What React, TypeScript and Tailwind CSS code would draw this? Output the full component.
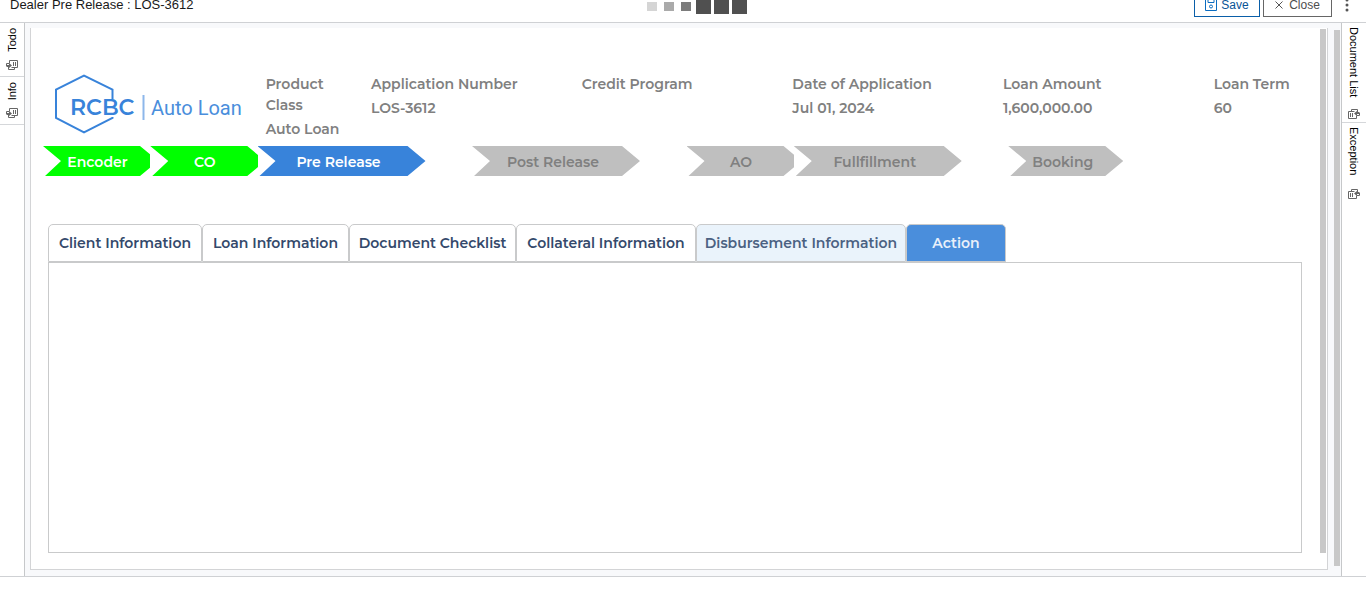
import React from "react";

const info = [
  { label: "Product Class", value: "Auto Loan", span: "col-span-1 pr-5" },
  { label: "Application Number", value: "LOS-3612", span: "col-span-2 pr-5" },
  { label: "Credit Program", value: "", span: "col-span-2 pr-5" },
  { label: "Date of Application", value: "Jul 01, 2024", span: "col-span-2 pr-5" },
  { label: "Loan Amount", value: "1,600,000.00", span: "col-span-2 pr-5" },
  { label: "Loan Term", value: "60", span: "col-span-1" },
];

const done = "bg-[#00ff00] text-white";
const current = "bg-[#3883da] text-white";
const pending = "bg-[#bfbfbf] text-[#808080]";

const steps = [
  { label: "Encoder", tone: done, span: "col-span-1", width: "w-[115px]" },
  { label: "CO", tone: done, span: "col-span-1", width: "w-[115px]" },
  { label: "Pre Release", tone: current, span: "col-span-2", width: "w-[168px]" },
  { label: "Post Release", tone: pending, span: "col-span-2", width: "w-[168px]" },
  { label: "AO", tone: pending, span: "col-span-1", width: "w-[115px]" },
  { label: "Fullfillment", tone: pending, span: "col-span-2", width: "w-[168px]" },
  { label: "Booking", tone: pending, span: "col-span-2", width: "w-[115px]" },
];

const plainTab = "bg-white text-[#34496b]";
const tabs = [
  { label: "Client Information", style: plainTab, width: "w-[154px]" },
  { label: "Loan Information", style: plainTab, width: "w-[147px]" },
  { label: "Document Checklist", style: plainTab, width: "w-[167px]" },
  { label: "Collateral Information", style: plainTab, width: "w-[180px]" },
  { label: "Disbursement Information", style: "bg-[#eaf3fb] text-[#4b6182]", width: "w-[210px]" },
  { label: "Action", style: "bg-[#4a8edc] text-[#e9f0fa]", width: "w-[100px]" },
];

function PanelIcon({ flipped = false }: { flipped?: boolean }) {
  return (
    <svg
      viewBox="0 0 12 10"
      className={flipped ? "h-[10px] w-3 shrink-0 rotate-180" : "h-[10px] w-3 shrink-0"}
      fill="none"
      stroke="#666"
      aria-hidden="true"
    >
      <path d="M3.500 3V.5h8v7h-6" />
      <path d="M7.500 2v4M9.500 2v4" />
      <path d="M2.500 7v2.500h6v-2" />
      <path d="M.5 6.500v-3h3" />
      <path d="M1 5h2V3l3 2.500L3 8V7H1z" fill="#666" stroke="none" />
    </svg>
  );
}

function Logo() {
  return (
    <svg viewBox="0 0 190 64" className="h-16 w-[190px]" role="img" aria-label="RCBC Auto Loan">
      <path
        d="M57.500 28V18.500L29 4.500 1 18.500V47L29 61.500 57.500 47V46"
        fill="none"
        stroke="#3883da"
        strokeWidth="2"
      />
      <text x="15" y="44" fill="#3883da" fontFamily="Montserrat, Inter, sans-serif" fontSize="22" fontWeight="600">
        RCBC
      </text>
      <path d="M88.500 24v25" stroke="#8db7ea" strokeWidth="2" />
      <text x="96" y="44" fill="#4a8edc" fontFamily="Roboto, sans-serif" fontSize="20" fontWeight="400">
        Auto Loan
      </text>
    </svg>
  );
}

function SideItem({ label, size, flipped }: { label: string; size: string; flipped?: boolean }) {
  return (
    <button
      type="button"
      className={`flex w-full flex-col items-center justify-between border-[#d5d7da] text-[11px] leading-3 text-black ${size}`}
    >
      <span className={flipped ? "[writing-mode:vertical-rl]" : "rotate-180 [writing-mode:vertical-rl]"}>{label}</span>
      <PanelIcon flipped={flipped} />
    </button>
  );
}

export default function App() {
  return (
    <div className="bg-white font-['Liberation_Sans',Arial,sans-serif]">
      <header className="grid h-[23px] grid-cols-[1fr_auto_1fr] grid-rows-[22px] items-end overflow-hidden border-b border-[#cfd1d4]">
        <h1 className="pb-[9px] pl-[10px] text-[13px] leading-4 text-[#1a1a1a]">Dealer Pre Release : LOS-3612</h1>
        <div className="flex h-[22px] items-start gap-[3px] pl-7" role="status" aria-label="Loading">
          <span className="mt-[2px] mr-1 h-[9px] w-[10px] bg-[#d5d5d5]" />
          <span className="mt-[2px] mr-1 h-[9px] w-[10px] bg-[#aaaaaa]" />
          <span className="mt-[2px] mr-[2px] h-[9px] w-[10px] bg-[#7c7c7c]" />
          <span className="h-[14px] w-[15px] bg-[#505050]" />
          <span className="h-[14px] w-[15px] bg-[#505050]" />
          <span className="h-[14px] w-[15px] bg-[#505050]" />
        </div>
        <div className="flex items-end justify-end gap-[3px] pr-[17px] pb-[5px] text-xs">
          <button type="button" className="flex h-6 w-[66px] items-center justify-center gap-1 border border-[#0a5ea8] text-[#0a5495]">
            <svg viewBox="0 0 12 12" className="size-3" fill="none" stroke="#0a6cc0" aria-hidden="true">
              <path d="M.5 .5h11v11H.5zM3 .5v3h6v-3" />
              <circle cx="6" cy="7.500" r="1.500" />
            </svg>
            Save
          </button>
          <button type="button" className="flex h-6 w-[69px] items-center justify-center gap-[6px] border border-[#666] text-[#4d4d4d]">
            <svg viewBox="0 0 8 8" className="size-2" fill="none" stroke="#555" aria-hidden="true">
              <path d="M.5 .5l7 7M7.500 .5l-7 7" />
            </svg>
            Close
          </button>
          <button type="button" aria-label="More" className="ml-[10px] pb-[5px]">
            <svg viewBox="0 0 4 14" className="h-[14px] w-1" fill="#555" aria-hidden="true">
              <circle cx="2" cy="2" r="1.500" />
              <circle cx="2" cy="7" r="1.500" />
              <circle cx="2" cy="12" r="1.500" />
            </svg>
          </button>
        </div>
      </header>

      <div className="flex border-b border-[#cfd1d4]">
        <nav aria-label="Left panels" className="w-[25px] shrink-0 border-r border-[#c6c8ca]">
          <SideItem label="Todo" size="h-[54px] border-b pt-[5px] pb-[6px]" />
          <SideItem label="Info" size="h-12 border-b pt-[5px] pb-[6px]" />
        </nav>

        <main className="flex min-w-0 grow bg-[#f8f9fb] pt-[5px] pb-[6px] pl-[5px] font-[Montserrat,Inter,sans-serif]">
          <div className="flex min-w-0 grow border-x border-b border-[#d3d4d6] bg-white">
            <div className="min-w-0 grow overflow-hidden pb-4">
              <section className="grid grid-cols-12 pt-[43px] pr-px pl-6 text-[14px] leading-[21px] font-semibold text-[#808080]">
                <div className="col-span-2">
                  <Logo />
                </div>
                {info.map((item) => (
                  <dl key={item.label} className={`pt-[3px] ${item.span}`}>
                    <dt>{item.label}</dt>
                    <dd className="mt-[3px]">{item.value}</dd>
                  </dl>
                ))}
              </section>

              <ol className="-mr-[10px] ml-3 grid grid-cols-12 pt-[6px] text-[14px] font-semibold">
                {steps.map((step) => (
                  <li key={step.label} className={`overflow-hidden ${step.span}`}>
                    <div
                      className={`flex h-[30px] items-center justify-center pt-[2px] pr-[6px] [clip-path:polygon(0_0,calc(100%-18px)_0,100%_50%,calc(100%-18px)_100%,2px_100%,18px_50%)] ${step.tone} ${step.width}`}
                    >
                      {step.label}
                    </div>
                  </li>
                ))}
              </ol>

              <section className="mt-12 mr-[18px] ml-[17px]">
                <div role="tablist" className="flex text-[14px] font-semibold">
                  {tabs.map((tab) => (
                    <button
                      key={tab.label}
                      type="button"
                      role="tab"
                      aria-selected={tab.label === "Action"}
                      className={`h-[38px] shrink-0 rounded-t-[5px] border border-[#c9cacb] whitespace-nowrap ${tab.style} ${tab.width}`}
                    >
                      {tab.label}
                    </button>
                  ))}
                </div>
                <div role="tabpanel" className="h-[291px] border border-[#c9cacb]" />
              </section>
            </div>
            <div className="mt-px mr-px mb-4 w-[6px] shrink-0 bg-[#c8c8c8]" />
          </div>
          <div className="mt-[2px] mr-px mb-1 ml-[6px] w-[6px] shrink-0 bg-[#c8c8c8]" />
        </main>

        <nav aria-label="Right panels" className="w-[25px] shrink-0 border-l border-[#c6c8ca]">
          <SideItem label="Document List" size="h-[100px] border-b pt-1 pb-[3px]" flipped />
          <SideItem label="Exception" size="h-[79px] pt-1 pb-[3px]" flipped />
        </nav>
      </div>
    </div>
  );
}
